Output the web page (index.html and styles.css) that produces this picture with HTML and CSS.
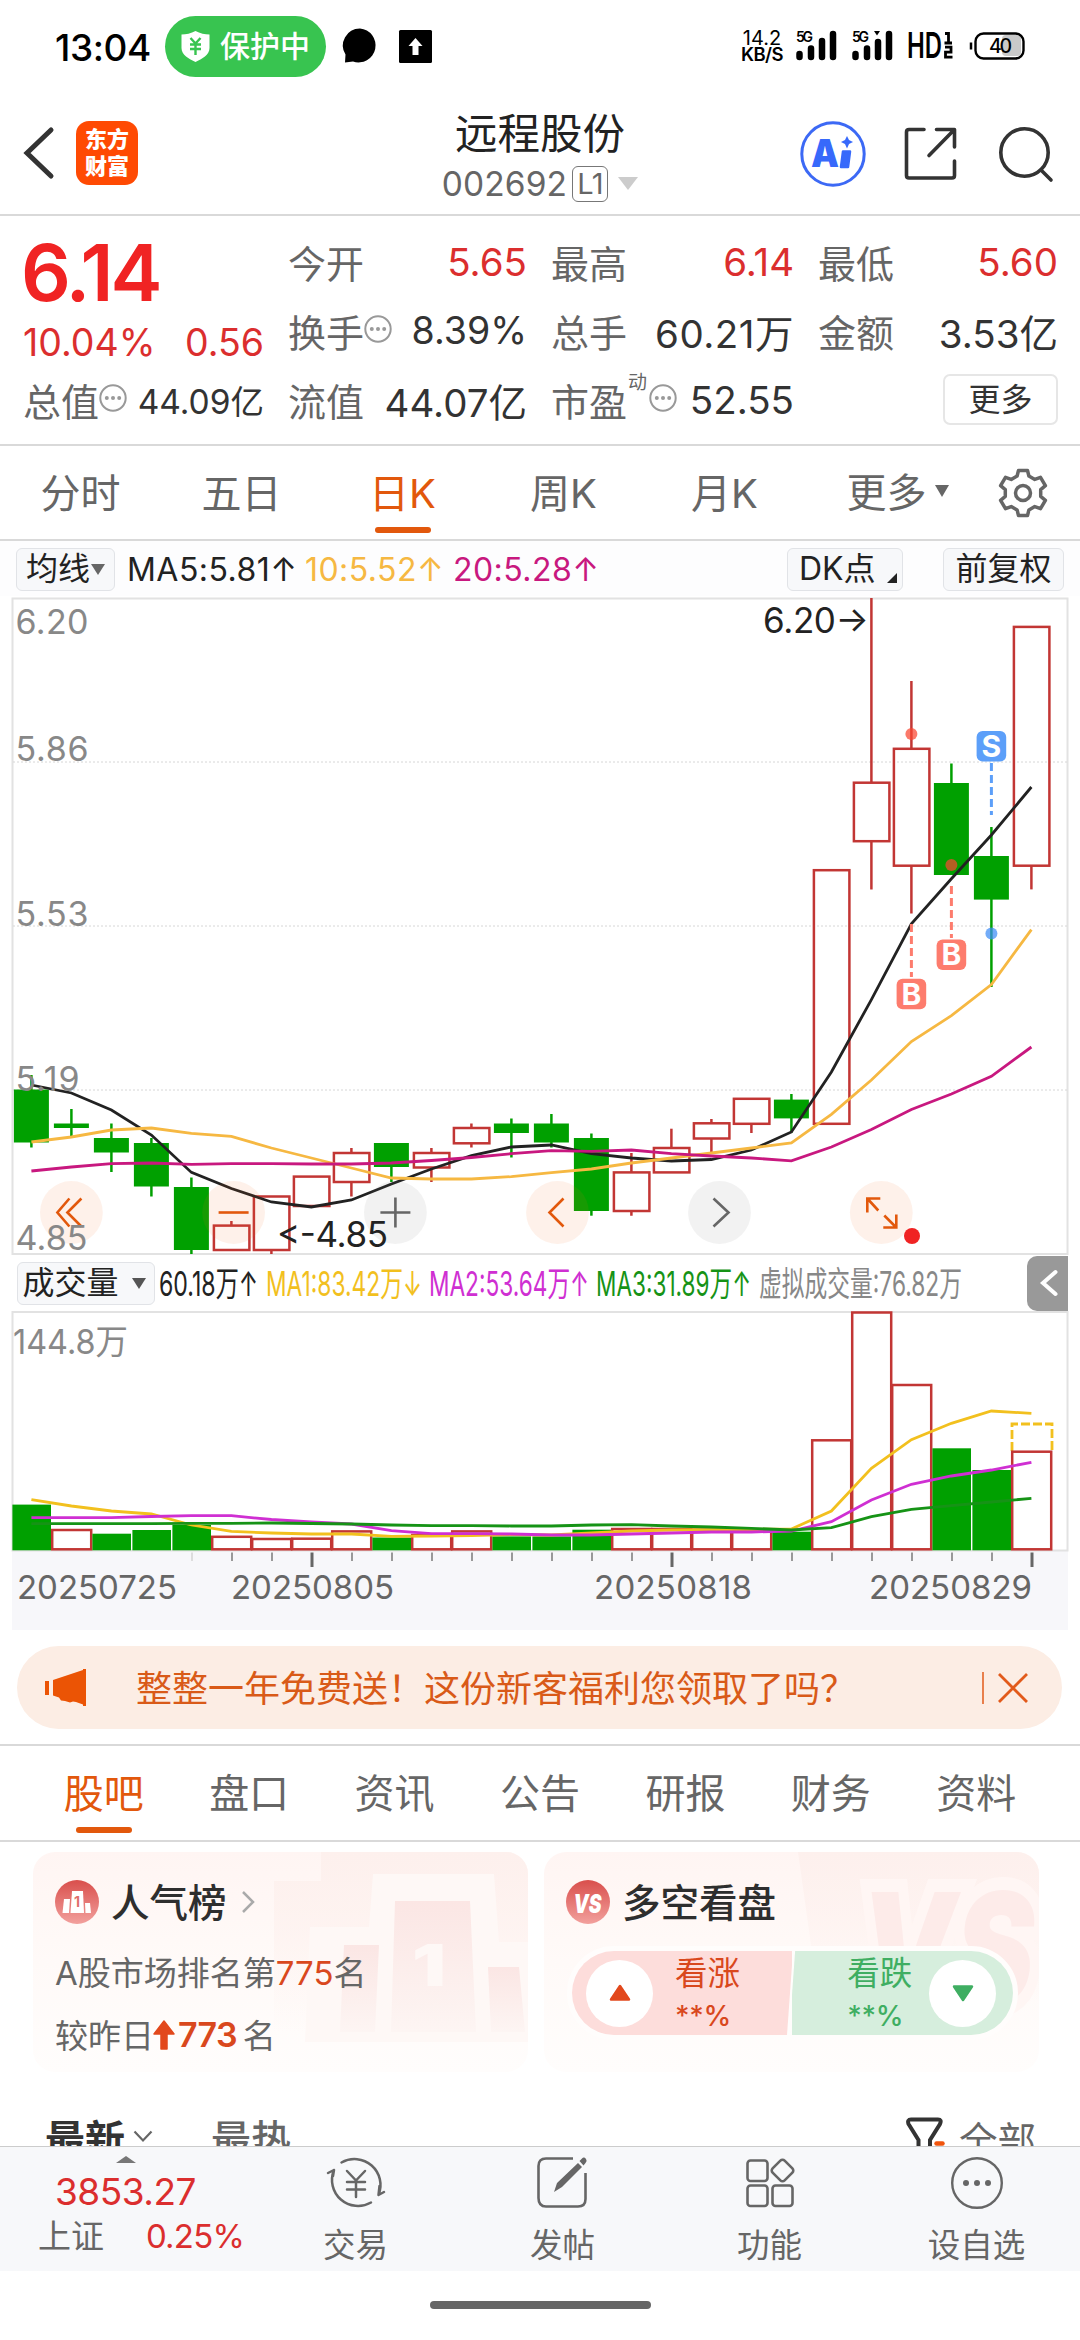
FILE: index.html
```html
<!DOCTYPE html>
<html lang="zh-CN">
<head>
<meta charset="utf-8">
<title>远程股份 002692</title>
<link rel="stylesheet" href="styles.css">
</head>
<body>
<div class="screen">
  <div class="status">
    <span class="clock">13:04</span>
    <span class="guard">
      <svg width="29" height="31" viewBox="0 0 29 31"><path d="M14.500 0C19 2.500 24 3.500 28.500 3.500V17C28.500 24 21 28 14.500 31C8 28 .5 24 .5 17V3.500C5 3.500 10 2.500 14.500 0Z" fill="#fff"/><path d="M9.500 7l5 5.500 5-5.500M14.500 12.500V24M9 13.500h11M9 18h11" fill="none" stroke="#38c450" stroke-width="2.400"/></svg>
      <span>保护中</span>
    </span>
    <svg class="bubble" width="36" height="36" viewBox="0 0 36 36"><path d="M18 .5A17 17 0 1 1 11 33.500L3 34.500L3.500 26.500A17 17 0 0 1 18 .5Z"/></svg>
    <svg class="upbox" width="33" height="33" viewBox="0 0 33 33"><rect width="33" height="33" rx="1.500"/><path d="M16.500 8l7 8h-4v9h-6v-9h-4Z" fill="#fff"/></svg>
    <div class="status-right">
      <div class="speed"><span>14.2</span><b>KB/S</b></div>
      <svg class="sig" width="41" height="32" viewBox="0 0 41 32"><text class="g5" x="0" y="11.500" textLength="17">5G</text><g stroke="#000" stroke-width="6.500" stroke-linecap="round"><path d="M3.500 24v3M15 18.500v8.500M26 11v16M37 4v23"/></g></svg>
      <svg class="sig sig2" width="41" height="32" viewBox="0 0 41 32"><text class="g5" x="0" y="11.500" textLength="17">5G</text><path d="M22 1h6l-3 4.500Z"/><g stroke="#000" stroke-width="6.500" stroke-linecap="round"><path d="M3.500 24v3M15 18.500v8.500M26 12v15M37 4v23"/></g></svg>
      <svg class="hd" width="46" height="30" viewBox="0 0 46 30"><text class="hdt" x="-1" y="27" textLength="35" lengthAdjust="spacingAndGlyphs">HD</text><g fill="none" stroke="#000" stroke-width="2.800"><path d="M37 2.500h3.500V12M36.500 12h7.500M37 16.200h6v5h-5.500v5h7"/></g></svg>
      <svg class="bat" width="56" height="30" viewBox="0 0 56 30"><path d="M1 11.500v7" stroke="#000" stroke-width="2.500"/><rect x="32" y="4" width="19" height="21" rx="4" fill="#c9c9c9"/><rect x="5.500" y="2.500" width="48" height="25" rx="8" fill="none" stroke="#000" stroke-width="2.400"/><text class="batt" x="19" y="22" textLength="23">40</text></svg>
    </div>
  </div>

  <header class="head">
    <svg class="back" width="32" height="52" viewBox="0 0 32 52"><path d="M28 3L4 26L28 49" fill="none" stroke="#333" stroke-width="5" stroke-linecap="round"/></svg>
    <div class="logo"><span>东方</span><span>财富</span></div>
    <div class="titles">
      <h1>远程股份</h1>
      <div class="code"><span>002692</span><i>L1</i><b class="tri"></b></div>
    </div>
    <div class="head-icons">
      <svg width="66" height="68" viewBox="0 0 66 68"><circle cx="33" cy="34" r="31.200" fill="none" stroke="#3c69f5" stroke-width="3"/><text class="ai" x="11" y="47" textLength="28" lengthAdjust="spacingAndGlyphs">A</text><path d="M43 31.500h7l-2 15.500h-7Z" fill="#3769fb" stroke="#3769fb" stroke-width="2.500" stroke-linejoin="round"/><path d="M47 16l2 4 4 2-4 2-2 4.500-2-4.500-4-2 4-2Z" fill="#3769fb"/></svg>
      <svg class="share" width="54" height="54" viewBox="0 0 54 54" fill="none" stroke="#333" stroke-width="3.600" stroke-linecap="round" stroke-linejoin="round"><path d="M20 2.500H5Q2.500 2.500 2.500 5V48.500Q2.500 51 5 51H48Q50.500 51 50.500 48.500V34M32.500 2.500H50.500V20M49.500 3.500L25 28.500"/></svg>
      <svg class="search" width="56" height="56" viewBox="0 0 56 56" fill="none" stroke="#333" stroke-width="3.600" stroke-linecap="round"><circle cx="26.500" cy="26.500" r="23.700"/><path d="M43 44L53 54"/></svg>
    </div>
  </header>

  <section class="quote">
    <div class="q-main">
      <div class="price">6.14</div>
      <div class="chg"><span>10.04%</span><span>0.56</span></div>
      <div class="cell small"><label>总值<svg class="info" viewBox="0 0 28 28"><use href="#dots"/></svg></label><span>44.09亿</span></div>
    </div>
    <div class="cell red"><label>今开</label><span>5.65</span></div>
    <div class="cell red"><label>最高</label><span>6.14</span></div>
    <div class="cell red"><label>最低</label><span>5.60</span></div>
    <div class="cell pct"><label>换手<svg class="info" viewBox="0 0 28 28"><use href="#dots"/></svg></label><span>8.39%</span></div>
    <div class="cell"><label>总手</label><span class="loose">60.21万</span></div>
    <div class="cell"><label>金额</label><span>3.53亿</span></div>
    <div class="cell"><label>流值</label><span>44.07亿</span></div>
    <div class="cell"><label>市盈<sup>动</sup><svg class="info" viewBox="0 0 28 28"><use href="#dots"/></svg></label><span>52.55</span></div>
    <div class="cell end"><button class="more">更多</button></div>
  </section>

  <nav class="ktabs">
    <a>分时</a><a>五日</a><a class="on">日K</a><a>周K</a><a>月K</a><a class="wide">更多<i></i></a>
    <svg class="gear" width="50" height="50" viewBox="-25 -25 50 50" fill="none" stroke="#666" stroke-width="3.500" stroke-linejoin="round"><path d="M-5.900-17L-4.500-22.500H4.500L5.900-17L11.800-13.600L17.500-15.700L22.400-7.300L17.700-3.400V3.400L22.400 7.300L17.500 15.700L11.800 13.600L5.900 17L4.500 22.500H-4.500L-5.900 17L-11.800 13.600L-17.500 15.700L-22.400 7.300L-17.700 3.400V-3.400L-22.400-7.300L-17.500-15.700L-11.800-13.600Z"/><circle r="7.500"/></svg>
  </nav>

  <div class="ma-row">
    <button class="chip ma-chip">均线<i></i></button>
    <span class="ma5">MA5:5.81↑</span><span class="ma10">10:5.52↑</span><span class="ma20">20:5.28↑</span>
    <button class="chip dk">DK点<i></i></button>
    <button class="chip fq">前复权</button>
  </div>

  <svg class="kline" width="1080" height="660" viewBox="0 596 1080 660" id="kline"></svg>

  <div class="vol-row">
    <button class="chip vol-chip">成交量<i></i></button>
    <svg class="vol-legend" width="810" height="50" viewBox="156 1259 810 50">
      <text x="159" y="1297" fill="#222" textLength="99" lengthAdjust="spacingAndGlyphs">60.18万↑</text>
      <text x="266" y="1297" fill="#f2c01e" textLength="156" lengthAdjust="spacingAndGlyphs">MA1:83.42万↓</text>
      <text x="429" y="1297" fill="#cf2fd2" textLength="160" lengthAdjust="spacingAndGlyphs">MA2:53.64万↑</text>
      <text x="596" y="1297" fill="#169316" textLength="155" lengthAdjust="spacingAndGlyphs">MA3:31.89万↑</text>
      <text x="759" y="1297" fill="#888" textLength="203" lengthAdjust="spacingAndGlyphs">虚拟成交量:76.82万</text>
    </svg>
    <div class="drawer"><svg width="20" height="28" viewBox="0 0 20 28"><path d="M16.500 3L4 14L16.500 25" fill="none" stroke="#fff" stroke-width="4" stroke-linecap="round"/></svg></div>
  </div>

  <svg class="volume" width="1080" height="320" viewBox="0 1310 1080 320" id="volume"></svg>

  <div class="banner">
    <svg width="42" height="38" viewBox="0 0 42 38" fill="#eb5405"><path d="M0 12h4v14H0ZM8 11L38 1V0h3v37h-3v-1.500L31 33L28 32.500L25 33.500L20 32L16 31.500L14 28.500L8 26.500Z"/></svg>
    <span>整整一年免费送！这份新客福利您领取了吗？</span>
    <svg class="close" width="50" height="36" viewBox="0 0 50 36" fill="none" stroke="#e25a1a"><path d="M2 2v32" stroke-width="1.500"/><path d="M18 4L46 32M46 4L18 32" stroke-width="2.800"/></svg>
  </div>

  <nav class="itabs"><a class="on">股吧</a><a>盘口</a><a>资讯</a><a>公告</a><a>研报</a><a>财务</a><a>资料</a></nav>

  <div class="feed">
    <div class="cards">
      <div class="card">
        <svg class="mark" width="495" height="220" viewBox="0 0 495 220">
          <defs><linearGradient id="f1" x1="0" y1="0" x2="0" y2="1"><stop offset="0" stop-color="#fdf0ed"/><stop offset="1" stop-color="#fdf0ed" stop-opacity="0"/></linearGradient>
          <linearGradient id="f2" x1="0" y1="0" x2="0" y2="1"><stop offset="0" stop-color="#fbe6e4"/><stop offset="1" stop-color="#fdf5f3"/></linearGradient></defs>
          <path d="M288 0H495V180H241V29H288Z" fill="url(#f1)"/>
          <path d="M340 22H461L466 90H495V190H272L277 75H336Z" fill="#fef8f6"/>
          <g fill="url(#f2)"><path d="M362 49H437L443 180H358Z"/><path d="M311 93H346L342 180H307Z"/><path d="M455 115H486L492 180H458Z"/></g>
          <text class="mark1" x="379" y="134" textLength="34" lengthAdjust="spacingAndGlyphs">1</text>
        </svg>
        <div class="card-h">
          <svg width="44" height="44" viewBox="0 0 44 44"><use href="#badge"/><g fill="#fff"><path d="M17 11h11l1 22H15.500Z"/><path d="M9 19h6l-1 14H7.500Z"/><path d="M30 23h5l1 10h-5.500Z"/></g><text class="one" x="19" y="27">1</text></svg>
          <h2>人气榜</h2>
          <svg class="chev" width="15" height="24" viewBox="0 0 15 24"><path d="M2 2L12 12L2 22" fill="none" stroke="#aaa" stroke-width="2.500"/></svg>
        </div>
        <p class="rank">A股市场排名第<em>775</em>名</p>
        <p class="delta">较昨日<svg width="22" height="30" viewBox="0 0 22 30"><path d="M11 1L21 14H14V29H8V14H1Z" fill="#e2481c" stroke="#e2481c" stroke-width="1.500" stroke-linejoin="round"/></svg><b>773</b>名</p>
      </div>
      <div class="card">
        <svg class="mark" width="495" height="220" viewBox="0 0 495 220">
          <path d="M254 0H495V150H275Z" fill="url(#f1)"/>
          <text class="vs-bg" x="316" y="152" textLength="174" lengthAdjust="spacingAndGlyphs">VS</text>
        </svg>
        <div class="card-h">
          <svg width="44" height="44" viewBox="0 0 44 44"><use href="#badge"/><text class="vs" x="7.500" y="33" textLength="28" lengthAdjust="spacingAndGlyphs">VS</text></svg>
          <h2>多空看盘</h2>
        </div>
        <div class="vote">
          <div class="up"><span class="knob"><svg width="22" height="18" viewBox="0 0 22 18"><path d="M11 2L20 15.500H2Z" fill="#e2481c" stroke="#e2481c" stroke-width="2.500" stroke-linejoin="round"/></svg></span><div><span>看涨</span><small>**%</small></div></div>
          <div class="down"><div><span>看跌</span><small>**%</small></div><span class="knob"><svg width="22" height="18" viewBox="0 0 22 18"><path d="M11 16L20 2.500H2Z" fill="#3fae62" stroke="#3fae62" stroke-width="2.500" stroke-linejoin="round"/></svg></span></div>
        </div>
      </div>
    </div>
    <div class="sort">
      <b>最新</b>
      <svg class="sv" width="20" height="12" viewBox="0 0 20 12"><path d="M1.500 1.500L10 10.500L18.500 1.500" fill="none" stroke="#666" stroke-width="2.200"/></svg>
      <b class="dim">最热</b>
      <svg class="funnel" width="40" height="46" viewBox="0 0 40 46"><path d="M12.500 46V23L2.500 7Q1 2.500 5 2.500H32Q36 2.500 34 7L24 23V46" fill="none" stroke="#333" stroke-width="4"/><path d="M30.500 26.500h6" stroke="#f0540c" stroke-width="4.500" stroke-linecap="round"/></svg>
      <span>全部</span>
    </div>
  </div>

  <footer class="bar">
    <div class="index">
      <i></i>
      <div class="idx">3853.27</div>
      <div class="idx2"><label>上证</label><span>0.25%</span></div>
    </div>
    <a><svg width="60" height="54" viewBox="0 0 60 54" fill="none" stroke="#666" stroke-width="2.500" stroke-linecap="round" stroke-linejoin="round"><path d="M15.500 6.500A26 26 0 0 1 52.500 39L58 36M52.500 39L53.500 30M45 46.500A26 26 0 0 1 8 14L2 17M8 14L7 20"/><path d="M21 15l9 9.500 9-9.500M30 24.500V41M21 26h18M21 33.500h18"/></svg><span>交易</span></a>
    <a><svg width="54" height="54" viewBox="0 0 54 54"><path d="M37 2.500H10Q2.500 2.500 2.500 10V42Q2.500 50.500 10 50.500H42Q49.500 50.500 49.500 43V17" fill="none" stroke="#666" stroke-width="2.600"/><path d="M18 36L21 27L42 7L46 11L26 31ZM43.500 5L46 2.500Q48 .5 50 3Q51.500 5 49.500 7L47.500 9.500Z" fill="#666"/></svg><span>发帖</span></a>
    <a><svg width="50" height="54" viewBox="0 0 50 54" fill="none" stroke="#666" stroke-width="2.600"><rect x="2.500" y="4.500" width="20" height="20.500" rx="3"/><rect x="2.500" y="29.500" width="20" height="20.500" rx="3"/><rect x="27.500" y="29.500" width="20" height="20.500" rx="3"/><rect x="29" y="6" width="17" height="17" rx="3" transform="rotate(45 37.500 14.500)"/></svg><span>功能</span></a>
    <a><svg width="54" height="54" viewBox="0 0 54 54"><circle cx="27" cy="27" r="24.800" fill="none" stroke="#666" stroke-width="2.400"/><g fill="#666"><circle cx="16" cy="27" r="3"/><circle cx="27" cy="27" r="3"/><circle cx="38" cy="27" r="3"/></g></svg><span>设自选</span></a>
  </footer>
  <div class="home"><i></i></div>
</div>

<svg class="defs" width="0" height="0">
  <defs>
    <linearGradient id="bg" x1="0" y1="0" x2="0" y2="1"><stop offset="0" stop-color="#d94f4c"/><stop offset="1" stop-color="#f2a09d"/></linearGradient>
    <circle id="badge" cx="22" cy="22" r="22" fill="url(#bg)"/>
    <g id="dots"><circle cx="14" cy="14" r="12.700" fill="none" stroke="#999" stroke-width="2"/><g fill="#999"><circle cx="7.800" cy="14" r="2"/><circle cx="14" cy="14" r="2"/><circle cx="20.200" cy="14" r="2"/></g></g>
  </defs>
</svg>
<script src="chart.js"></script>
</body>
</html>
```
FILE: styles.css
```css
* { box-sizing: border-box; margin: 0; padding: 0; }
body { background: #fff; font-family: Inter, "Noto Sans CJK SC", sans-serif; color: #222; }
svg { display: block; flex: none; overflow: visible; }
i, em { font-style: normal; }
button { background: none; border: 0; font: inherit; color: inherit; }
.screen { width: 1080px; height: 2340px; overflow: hidden; display: flex; flex-direction: column; white-space: nowrap; }
.screen > * { flex: none; }
.defs { position: absolute; }

/* status bar */
.status { height: 92px; padding-left: 55px; display: flex; align-items: center; color: #000; }
.clock { width: 110px; padding-top: 2px; font-size: 37px; font-weight: 500; letter-spacing: -.4px; }
.guard { width: 161px; height: 61px; border-radius: 31px; background: #38c450; color: #fff; display: flex; align-items: center; padding-left: 16px; gap: 10px; font-size: 30px; line-height: 61px; font-weight: 500; }
.bubble { margin-left: 16px; }
.upbox { margin-left: 21px; }
.status-right { display: flex; align-items: center; margin-left: auto; padding-right: 54px; }
.speed { width: 42px; margin-right: 13px; display: flex; flex-direction: column; align-items: center; font-size: 20px; line-height: 16px; }
.speed b { font-weight: 600; font-size: 18.500px; letter-spacing: -.6px; }
.g5 { font: 600 14px Inter, sans-serif; }
.sig2 { margin-left: 15px; }
.hd { margin-left: 15px; }
.hdt { font: 600 35px Inter, sans-serif; }
.bat { margin-left: 16px; }
.batt { font: 500 19.500px Inter, sans-serif; }

/* header */
.head { height: 124px; border-bottom: 2px solid #d9d9d9; display: flex; align-items: center; padding-left: 23px; }
.logo { width: 62px; height: 64px; margin-left: 21px; border-radius: 13px; background: #ff4a03; color: #fff; font-size: 22px; font-weight: 900; line-height: 27px; display: flex; flex-direction: column; align-items: center; justify-content: center; }
.titles { margin-left: 302px; width: 200px; padding-top: 7px; display: flex; flex-direction: column; align-items: center; }
.titles h1 { font-size: 42.500px; font-weight: 400; line-height: 54px; }
.code { display: flex; align-items: center; font-size: 33.500px; line-height: 46px; color: #666; }
.code span { letter-spacing: .1px; }
.code i { width: 36px; height: 36px; margin-left: 5px; border: 1.500px solid #777; border-radius: 6px; font-size: 29px; line-height: 33px; text-align: center; letter-spacing: -.5px; }
.tri { margin-left: 10px; border: 10px solid transparent; border-top: 13px solid #ccc; border-bottom: 0; }
.head-icons { display: flex; align-items: center; margin-left: auto; padding: 2px 26px 0 0; }
.ai { font: 900 38px Inter, sans-serif; fill: #3769fb; }
.share { margin-left: 38px; }
.search { margin-left: 40px; }

/* quote */
.quote { height: 230px; border-bottom: 2px solid #d9d9d9; padding: 11px 0 0 23px; display: grid; grid-template-columns: 241px 239px 243px 240px; grid-template-rows: repeat(3, 69px); column-gap: 24px; }
.q-main { grid-row: span 3; display: flex; flex-direction: column; color: #db2e2e; }
.price { height: 91px; line-height: 91px; font-size: 78px; font-weight: 600; letter-spacing: -3px; margin-left: -2px; color: #f02323; }
.chg { height: 47px; line-height: 50px; font-size: 37.500px; display: flex; justify-content: space-between; }
.cell { display: flex; align-items: center; justify-content: space-between; height: 69px; font-size: 38.500px; color: #333; }
.cell label { font-size: 38px; color: #666; display: flex; align-items: center; margin-top: -1px; }
.cell.red span { color: #db2e2e; }
.cell.small span { font-size: 33.500px; }
.pct { font-size: 37.500px; }
.loose { letter-spacing: .5px; }
.info { width: 28px; height: 28px; margin-top: -3px; }
.cell sup { font-size: 19px; line-height: 20px; align-self: flex-start; margin: 1px 2px 0 1px; }
.end { justify-content: flex-end; }
.more { width: 115px; height: 51px; border: 2px solid #e6e6e6; border-radius: 7px; font-size: 32px; line-height: 45px; }

/* period tabs */
.ktabs { height: 95px; border-bottom: 2px solid #d9d9d9; display: flex; align-items: center; }
.ktabs a { width: 161px; height: 95px; line-height: 97px; text-align: center; font-size: 40px; color: #666; position: relative; }
.ktabs .wide { width: 185px; display: flex; align-items: center; justify-content: center; gap: 8px; }
.wide i { border: 7px solid transparent; border-top: 12px solid #666; border-bottom: 0; margin-top: -4px; }
.gear { margin-left: 8px; }
.on { color: #e2580c !important; }
.on::after { content: ""; position: absolute; left: 50%; bottom: 7px; width: 56px; height: 6px; margin-left: -28px; border-radius: 3px; background: #e2580c; }

/* legends */
.ma-row { height: 55px; padding-top: 1px; background: #fdfdfe; display: flex; align-items: center; padding-left: 16px; font-size: 32px; letter-spacing: .45px; }
.chip { height: 43px; border: 1.500px solid #e1e3e7; border-radius: 6px; background: #f7f8fa; font-size: 32px; line-height: 40px; display: flex; align-items: center; justify-content: center; letter-spacing: 0; }
.ma-chip { width: 99px; }
.ma-chip i { border: 7px solid transparent; border-top: 11px solid #666; border-bottom: 0; margin-left: 1px; }
.ma5 { width: 178px; margin-left: 12px; }
.ma10 { width: 148px; color: #f6b842; }
.ma20 { color: #c8187f; }
.dk { width: 116px; margin-left: auto; justify-content: flex-start; padding-left: 11px; }
.dk i { border-left: 10px solid transparent; border-bottom: 10px solid #222; margin: 18px 0 0 11px; }
.fq { width: 121px; margin: 0 16px 0 40px; }
.vol-row { height: 54px; display: flex; align-items: center; padding-left: 17px; }
.vol-chip { width: 138px; gap: 13px; padding-right: 4px; }
.vol-chip i { border: 7px solid transparent; border-top: 11px solid #555; border-bottom: 0; }
.vol-legend { margin-left: 1px; }
.vol-legend text { font: 34px Inter, "Noto Sans CJK SC", sans-serif; }
.drawer { margin-left: auto; margin-right: 12px; width: 41px; height: 55px; border-radius: 10px 0 0 10px; background: #999; display: flex; align-items: center; padding-left: 12px; }

/* chart text */
.axis { font: 34px Inter, "Noto Sans CJK SC", sans-serif; fill: #888; }
.peak { font: 35px Inter, sans-serif; fill: #222; }
.date { font: 33px Inter, sans-serif; fill: #666; }
.flag { font: 700 30px Inter, sans-serif; fill: #fff; text-anchor: middle; }

/* banner */
.banner { height: 83px; margin: 16px 18px 0 17px; border-radius: 42px; background: #fcede4; color: #d95a18; font-size: 36px; display: flex; align-items: center; padding-left: 28px; }
.banner span { margin-left: 49px; margin-top: -3px; }
.close { margin-left: auto; margin-right: 31px; }

/* info tabs */
.itabs { height: 98px; margin-top: 15px; border-top: 2px solid #d9d9d9; border-bottom: 2px solid #d9d9d9; padding: 0 31px; display: flex; }
.itabs a { flex: 1; text-align: center; font-size: 40px; line-height: 96px; color: #666; position: relative; }

/* feed */
.feed { height: 304px; overflow: hidden; padding: 10px 41px 0 33px; }
.cards { display: grid; grid-template-columns: 495px 495px; gap: 16px; }
.card { height: 220px; border-radius: 22px; background: linear-gradient(#fff5f3, #fffaf8 50%, #fffdfc); padding: 28px 22px; position: relative; overflow: hidden; }
.card > * { position: relative; }
.card > .mark { position: absolute; left: 0; top: 0; }
.mark1 { font: 900 58px Inter, sans-serif; fill: #fef8f6; }
.vs-bg { font: italic 900 154px Inter, sans-serif; fill: #fdebe9; stroke: #fff6f4; stroke-width: 26px; paint-order: stroke; stroke-linejoin: miter; }
.card-h { display: flex; align-items: center; height: 44px; }
.card-h h2 { font-size: 38.500px; line-height: 44px; font-weight: 500; margin: 2px 0 0 12px; color: #2e2e2e; }
.chev { margin-left: 14px; }
.one { font: 700 14px Inter, sans-serif; fill: #e0706c; }
.vs { font: italic 900 26px Inter, sans-serif; fill: #fff; }
.rank { margin-top: 24px; height: 50px; line-height: 50px; font-size: 33px; color: #666; }
.rank em { color: #d9481d; }
.delta { margin-top: 11px; height: 50px; font-size: 33px; color: #666; display: flex; align-items: center; }
.delta svg { margin: 2px 3px 0 -1px; }
.delta b { font-size: 34px; font-weight: 600; color: #d9481d; margin-right: 6px; letter-spacing: -.7px; }
.vote { margin: 22px 0 0 1px; width: 451px; height: 94px; border: 5px solid #fffdfc; border-radius: 47px; background: #fffdfc; display: flex; overflow: hidden; font-size: 32.500px; line-height: 40px; }
.vote > div { width: 224px; display: flex; align-items: center; }
.vote small { display: block; font-size: 28px; font-weight: 500; line-height: 40px; height: 40px; padding-top: 2px; letter-spacing: -.3px; }
.vote div span { display: block; margin-top: 2px; }
.up { background: #fddddb; color: #d9481d; clip-path: polygon(0 0, 221px 0, 215px 100%, 0 100%); padding-left: 14px; gap: 22px; }
.down { background: #d6eedd; color: #3fae62; clip-path: polygon(3px 0, 100% 0, 100% 100%, -3px 100%); padding-left: 55px; gap: 17px; }
.vote .knob { width: 67px; height: 67px; margin-top: 0; border-radius: 50%; background: #fff; display: flex; align-items: center; justify-content: center; flex: none; }
.sort { margin-top: 40px; height: 56px; display: flex; align-items: center; padding-left: 12px; font-size: 40px; line-height: 56px; color: #333; }
.sort b { font-weight: 700; }
.sv { margin-left: 8px; margin-top: -8px; }
.sort .dim { margin-left: 58px; color: #666; font-weight: 500; }
.funnel { margin-left: auto; }
.sort span { margin: 2px 3px 0 13px; color: #666; font-size: 38.500px; }

/* bottom bar */
.bar { height: 125px; background: #f7f8fa; border-top: 1.500px solid #ccc; display: flex; }
.index { width: 252px; padding: 9px 0 0 38px; }
.index i { display: block; width: 0; border: 10px solid transparent; border-bottom: 7px solid #777; border-top: 0; margin-left: 78px; }
.idx { font-size: 37px; line-height: 46px; margin: 6px 0 0 17px; color: #db2e2e; letter-spacing: -.5px; }
.idx2 { display: flex; justify-content: space-between; width: 206px; font-size: 33px; line-height: 42px; color: #db2e2e; letter-spacing: -.8px; }
.idx2 label { font-size: 33px; color: #666; letter-spacing: 0; }
.bar a { width: 207px; display: flex; flex-direction: column; align-items: center; padding-top: 9px; color: #666; font-size: 32.500px; }
.bar a span { line-height: 40px; margin-top: 16px; }
.home { height: 69px; display: flex; justify-content: center; padding-top: 30px; }
.home i { width: 221px; height: 8px; border-radius: 4px; background: #666; }
```
FILE: chart.js
```js
const NS = 'http://www.w3.org/2000/svg';
const RED = '#c23634', GREEN = '#00a000';
const X = i => 31.4 + 40 * i;

function add(parent, tag, attrs, text) {
  const el = document.createElementNS(NS, tag);
  for (const k in attrs) el.setAttribute(k, attrs[k]);
  if (text) el.textContent = text;
  parent.appendChild(el);
  return el;
}
function curve(parent, ys, color) {
  add(parent, 'polyline', { points: ys.map((y, i) => X(i) + ',' + y).join(' '), fill: 'none', stroke: color, 'stroke-width': 2.8 });
}

// rising flag, high, body top, body bottom, low
const candles = [
  [0,1075,1089.5,1142.5,1147.5],[0,1109,1123.5,1128,1136],[0,1123.5,1138,1152.5,1172],[0,1138,1143,1186.5,1196.5],
  [0,1177.5,1187,1250,1254],[1,1221,1225.6,1250,1250],[1,1196.5,1196.5,1250,1254],[1,1176.6,1176.6,1206,1206],
  [1,1148,1153,1182,1196.5],[0,1143,1143,1167,1182],[1,1148,1153,1167.5,1182],[1,1123.5,1128,1143.3,1147.5],
  [0,1118.5,1123.5,1133,1157.5],[0,1114,1123.5,1142.5,1147.5],[0,1133.5,1138,1211,1215.7],[1,1153,1172.4,1211,1215.7],
  [1,1128.7,1148,1172.4,1172.4],[1,1119,1123.3,1138.5,1152],[1,1098.8,1098.8,1123.8,1133],[0,1094,1099.6,1118.4,1132.7],
  [1,870.2,870.2,1123.8,1123.8],[1,598,782.7,841.2,889.4],[1,681,748.8,865.7,913.5],[0,763.5,783,875,875],
  [0,827,856,899.6,987],[1,626.9,626.9,865.7,889.4]
];
const ma5 = [1085,1093,1110,1135,1172.4,1188.5,1202,1207,1200,1184,1169,1155.6,1147,1145,1153.7,1158,1161,1159.5,1150,1132,1072,999.6,923.8,878.7,835,787];
const ma10 = [1142,1137,1130,1128,1133.4,1136.4,1148,1158,1168,1178,1179,1179,1176.6,1172.6,1169,1163,1158,1153,1148,1143,1114.4,1080,1041.6,1015.7,984.5,929.6];
const ma20 = [1171,1167,1163.6,1163,1164.4,1163.6,1163.6,1164,1164,1163,1160.5,1157.5,1153.7,1150.6,1151.4,1150,1153.7,1156,1158,1160.8,1147,1129.6,1109.5,1094,1076.4,1047];

const k = document.getElementById('kline');
add(k, 'rect', { x: 12.5, y: 598.5, width: 1055, height: 655.5, fill: 'none', stroke: '#e2e2e2', 'stroke-width': 2 });
[762, 926, 1090].forEach(y => add(k, 'path', { d: `M13 ${y}H1067`, stroke: '#d6d6d6', 'stroke-dasharray': '2 2' }));
candles.forEach(([up, hi, top, bot, lo], i) => {
  const x = X(i);
  if (up) {
    add(k, 'path', { d: `M${x} ${hi}V${top}M${x} ${bot}V${lo}`, stroke: RED, 'stroke-width': 2.5 });
    add(k, 'rect', { x: x - 17.5, y: top, width: 35.5, height: bot - top, fill: 'none', stroke: RED, 'stroke-width': 2.5 });
  } else {
    add(k, 'path', { d: `M${x} ${hi}V${lo}`, stroke: GREEN, 'stroke-width': 2.5 });
    add(k, 'rect', { x: x - 17.5, y: top, width: 35, height: bot - top, fill: GREEN });
  }
});
curve(k, ma5, '#222');
curve(k, ma10, '#f6b842');
curve(k, ma20, '#c8187f');

// buy and sell flags
[[22, 'B', 978.7, 924, 977, 734], [23, 'B', 939.4, 886, 938, 865], [24, 'S', 731, 763, 815, 933.6]].forEach(([i, s, y, d1, d2, dot]) => {
  const c = s === 'B' ? '#fd7c6d' : '#5c9ff9', x = X(i);
  add(k, 'circle', { cx: x, cy: dot, r: 6, fill: s === 'B' ? '#f94530' : '#3d8cf5', opacity: .72 });
  add(k, 'path', { d: `M${x} ${d1}V${d2}`, stroke: c, 'stroke-width': 3, 'stroke-dasharray': '8 4' });
  add(k, 'rect', { x: x - 14.8, y, width: 29.6, height: 30.5, rx: 6, fill: c });
  add(k, 'text', { x, y: y + 26, class: 'flag' }, s);
});

// chart controls
const O = '#e2580c', G = '#666';
[[71.4, O, 'M-2-14L-14 0L-2 14M10-14L-4 0L10 14'], [233.6, O, 'M-15 0H15'], [395.4, G, 'M-15 0H15M0-15V15'],
 [557.5, O, 'M6-14L-8 0L6 14'], [719.5, G, 'M-6-14L9 0L-6 14'], [881.3, O, 'M-14 0V-14H-1M-14-14L-3-2M15 2V15H2M15 15L3 3']
].forEach(([x, c, d]) => {
  const g = add(k, 'g', { transform: `translate(${x} 1212.5)` });
  add(g, 'circle', { r: 31.4, fill: c === O ? '#f56e1c' : '#777', opacity: .095 });
  add(g, 'path', { d, fill: 'none', stroke: c, 'stroke-width': 2.6 });
});
add(k, 'circle', { cx: 912, cy: 1236, r: 8, fill: '#f02323' });
[['6.20', 634, 73], ['5.86', 761, 73], ['5.53', 926, 73], ['5.19', 1091, 64], ['4.85', 1250, 72]].forEach(([t, y, w]) =>
  add(k, 'text', { x: 15.5, y, class: 'axis', textLength: w }, t));
add(k, 'text', { x: 763, y: 632.5, class: 'peak', textLength: 106 }, '6.20→');
add(k, 'text', { x: 277, y: 1247, class: 'peak', textLength: 111 }, '<-4.85');

// volume panel
const vol = [[0,1504.6],[1,1530],[0,1533.7],[0,1530],[0,1525],[1,1536.8],[1,1539],[1,1538.7],[1,1531.4],[0,1537.5],[1,1535],[1,1531.4],[0,1536.4],[0,1536.4],
  [0,1529.7],[1,1529],[1,1529],[1,1529.6],[1,1530.5],[0,1531.7],[1,1440.3],[1,1312.5],[1,1385],[0,1448.3],[0,1470],[1,1451.7]];
const v5 = [1499.6,1506,1511,1514,1525,1531.4,1533,1534,1534,1536.4,1536,1535.6,1534.5,1535,1533,1531,1530,1529.7,1529.3,1529,1511,1468.3,1439.7,1423.3,1411,1413.3];
const v10 = [1517.6,1517.6,1517.6,1516.5,1515.7,1515.7,1519.5,1522,1524,1530.6,1533.7,1533.7,1534,1535,1535,1534,1533,1532,1532,1531,1521.7,1500,1484.3,1476,1470,1462.3];
const v20 = [1523.7,1523.7,1523.7,1523.7,1523.3,1523.3,1523,1523.5,1524,1525,1525.6,1525.6,1526,1526,1525,1524.7,1526,1527,1528.3,1530,1527.7,1516.7,1509.3,1505.7,1502,1498.3];
const v = document.getElementById('volume');
add(v, 'rect', { x: 12, y: 1551, width: 1056, height: 79, fill: '#f7f7fa' });
add(v, 'rect', { x: 12.5, y: 1312, width: 1055, height: 238.5, fill: 'none', stroke: '#e2e2e2', 'stroke-width': 2 });
add(v, 'path', { d: 'M1012 1451V1424H1052V1451', fill: 'none', stroke: '#f2c01e', 'stroke-width': 2.8, 'stroke-dasharray': '9 3' });
vol.forEach(([up, y], i) => {
  const x = X(i);
  if (up) add(v, 'rect', { x: x - 19.2, y, width: 39, height: 1549.3 - y, fill: 'none', stroke: RED, 'stroke-width': 2.5 });
  else add(v, 'rect', { x: x - 19, y, width: 38.6, height: 1550.3 - y, fill: GREEN });
});
curve(v, v5, '#f2c01e');
curve(v, v10, '#cf2fd2');
curve(v, v20, '#169316');
for (let i = 4; i < 26; i++) {
  const big = i === 7 || i === 16 || i === 25;
  add(v, 'path', { d: `M${X(i) + .6} 1552.500V${big ? 1567 : 1561}`, stroke: i === 4 ? '#ddd' : big ? '#666' : '#999', 'stroke-width': big ? 3 : 2 });
}
add(v, 'text', { x: 13, y: 1354, class: 'axis', textLength: 115, lengthAdjust: 'spacingAndGlyphs' }, '144.8万');
[['20250725', 17, 160], ['20250805', 231, 163], ['20250818', 594, 158], ['20250829', 869, 163]].forEach(([t, x, w]) =>
  add(v, 'text', { x, y: 1599, class: 'date', textLength: w }, t));
```
